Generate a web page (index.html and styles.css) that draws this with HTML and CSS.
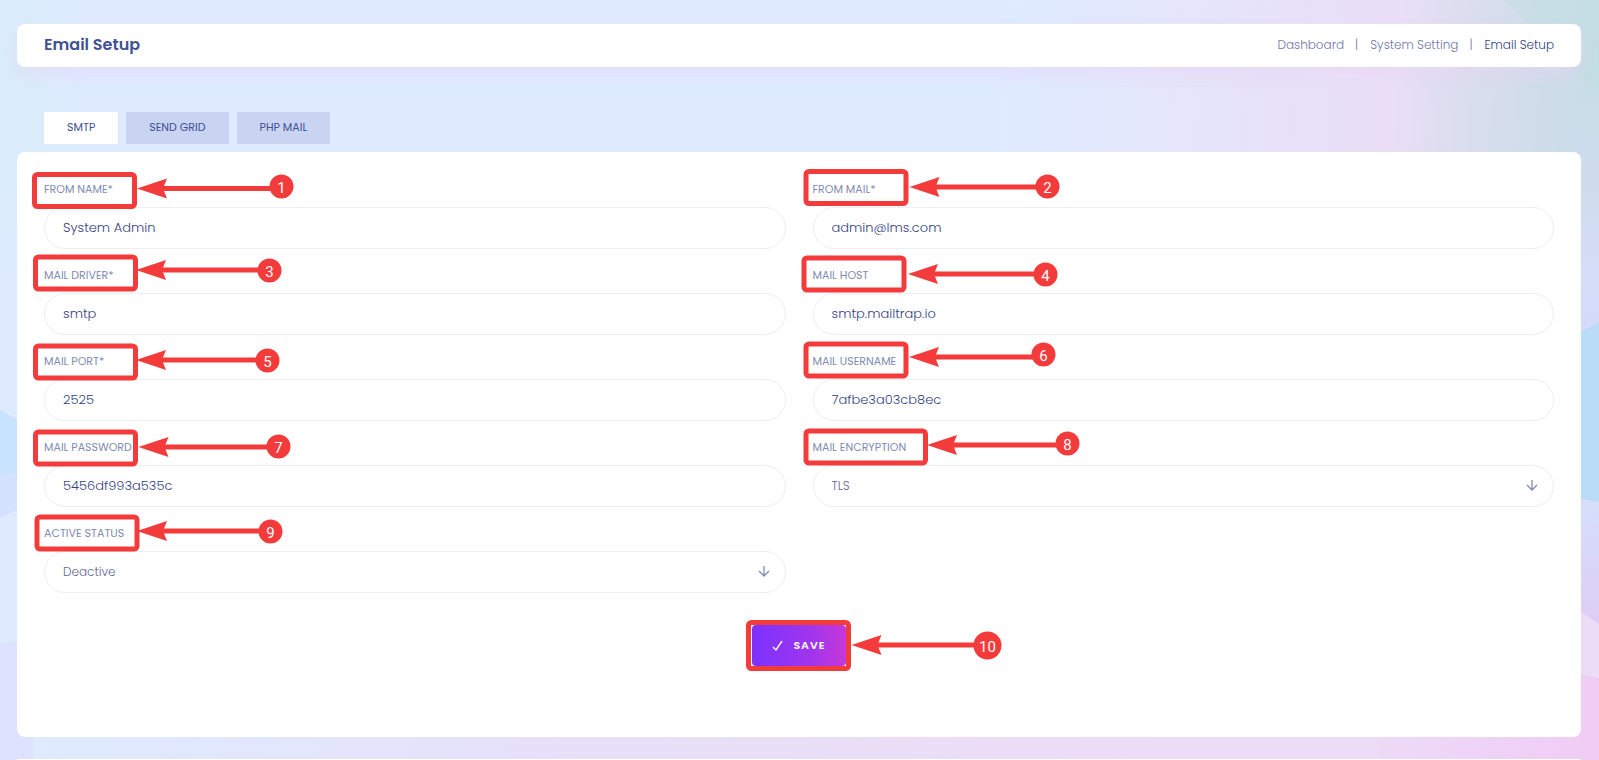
FILE: index.html
```html
<!DOCTYPE html>
<html lang="en">
<head>
    <meta charset="UTF-8">
    <meta name="viewport" content="width=device-width, initial-scale=1.0">
    <title>Email Setup</title>
    <link rel="stylesheet" href="styles.css">
</head>
<body>
    <!-- Page background -->
    <svg class="page-bg" viewBox="0 0 1599 760" preserveAspectRatio="none" aria-hidden="true">
        <defs>
            <linearGradient id="bg-base" gradientUnits="userSpaceOnUse" x1="560" y1="60" x2="1260" y2="620">
                <stop offset="0" stop-color="#deebff"/>
                <stop offset="0.5" stop-color="#e7e0f8"/>
                <stop offset="1" stop-color="#eddcf6"/>
            </linearGradient>
            <linearGradient id="bg-top" gradientUnits="userSpaceOnUse" x1="1000" y1="0" x2="1599" y2="60">
                <stop offset="0" stop-color="#deebff"/>
                <stop offset="0.35" stop-color="#e5e4fa"/>
                <stop offset="0.66" stop-color="#eadff7"/>
                <stop offset="0.8" stop-color="#d8dded"/>
                <stop offset="1" stop-color="#c8dde7"/>
            </linearGradient>
            <linearGradient id="bg-right" x1="0" y1="0" x2="0" y2="1">
                <stop offset="0" stop-color="#c8dde7"/>
                <stop offset="0.35" stop-color="#d0dced"/>
                <stop offset="0.7" stop-color="#d5dcf8"/>
                <stop offset="1" stop-color="#d3dbf9"/>
            </linearGradient>
            <radialGradient id="bg-left">
                <stop offset="0" stop-color="#d8ecf8"/>
                <stop offset="1" stop-color="#d8ecf8" stop-opacity="0"/>
            </radialGradient>
            <linearGradient id="bg-violet" x1="0" y1="0" x2="0" y2="1">
                <stop offset="0" stop-color="#d5dffa"/>
                <stop offset="1" stop-color="#decdf4"/>
            </linearGradient>
            <linearGradient id="bg-pink" gradientUnits="userSpaceOnUse" x1="1380" y1="0" x2="1599" y2="0">
                <stop offset="0" stop-color="#eddaf7"/>
                <stop offset="1" stop-color="#f0ccf5"/>
            </linearGradient>
        </defs>
        <rect width="1599" height="760" fill="url(#bg-base)"/>
        <rect width="1599" height="330" fill="url(#bg-top)"/>
        <rect x="1575" y="90" width="24" height="270" fill="url(#bg-right)"/>
        <path d="M1505 0 L1599 95 V0 Z" fill="#bfe0e0" fill-opacity="0.5"/>
        <ellipse cx="0" cy="90" rx="90" ry="200" fill="url(#bg-left)"/>
        <path d="M0 410 L40 432 V485 L0 475 Z" fill="#c8e3ff"/>
        <path d="M0 475 L40 470 V500 L0 518 Z" fill="#d5e2ff"/>
        <path d="M0 644 L36 638 L33 760 H0 Z" fill="#dfe2ff"/>
        <path d="M1575 335 L1599 322 V502 L1575 498 Z" fill="#bbdcf8"/>
        <path d="M1575 498 L1599 502 V625 L1575 610 Z" fill="url(#bg-violet)"/>
        <path d="M1575 608 L1599 624 V678 L1575 673 Z" fill="#eddcf6"/>
        <path d="M1575 673 L1599 678 V760 H1380 V737 H1575 Z" fill="url(#bg-pink)"/>
    </svg>

    <main class="page">
        <header class="page-header white-box">
            <h1>Email Setup</h1>
            <nav class="breadcrumb">
                <a href="#">Dashboard</a>
                <a href="#">System Setting</a>
                <a href="#" class="active">Email Setup</a>
            </nav>
        </header>

        <div class="tabs" role="tablist">
            <button type="button" role="tab" class="tab active" aria-selected="true">SMTP</button>
            <button type="button" role="tab" class="tab" aria-selected="false">SEND GRID</button>
            <button type="button" role="tab" class="tab" aria-selected="false">PHP MAIL</button>
        </div>

        <form class="white-box mail-form">
            <!-- Arrow head shared by all callouts, tip at 0,0 -->
            <svg class="defs" aria-hidden="true">
                <defs>
                    <path id="head" d="M-1 0 L29 -10 L25 0 L29 10 Z"/>
                </defs>
            </svg>

            <div class="fields">
                <div class="field">
                    <label for="from_name">FROM NAME*</label>
                    <input type="text" id="from_name" value="System Admin">
                    <svg class="callout">
                        <rect x="3.5" y="7.5" width="100" height="32" rx="3"/>
                        <path class="line" d="M130 21.5 H242"/>
                        <use href="#head" x="107" y="21.5"/>
                        <circle cx="250.5" cy="19.5" r="12"/>
                        <text x="250.5" y="25.5">1</text>
                    </svg>
                </div>
                <div class="field">
                    <label for="from_mail">FROM MAIL*</label>
                    <input type="text" id="from_mail" value="admin@lms.com">
                    <svg class="callout">
                        <rect x="6" y="4.5" width="100" height="32" rx="3"/>
                        <path class="line" d="M134 20 H240"/>
                        <use href="#head" x="110.5" y="20"/>
                        <circle cx="247.5" cy="19.5" r="12"/>
                        <text x="247.5" y="25.5">2</text>
                    </svg>
                </div>
                <div class="field">
                    <label for="mail_driver">MAIL DRIVER*</label>
                    <input type="text" id="mail_driver" value="smtp">
                    <svg class="callout">
                        <rect x="4.5" y="4" width="100" height="32" rx="3"/>
                        <path class="line" d="M128 17 H230"/>
                        <use href="#head" x="106" y="17"/>
                        <circle cx="238.5" cy="17.5" r="12"/>
                        <text x="238.5" y="23.5">3</text>
                    </svg>
                </div>
                <div class="field">
                    <label for="mail_host">MAIL HOST</label>
                    <input type="text" id="mail_host" value="smtp.mailtrap.io">
                    <svg class="callout">
                        <rect x="4" y="5" width="100" height="32" rx="3"/>
                        <path class="line" d="M132 21 H236"/>
                        <use href="#head" x="109" y="21"/>
                        <circle cx="245.5" cy="21.5" r="12"/>
                        <text x="245.5" y="27.5">4</text>
                    </svg>
                </div>
                <div class="field">
                    <label for="mail_port">MAIL PORT*</label>
                    <input type="text" id="mail_port" value="2525">
                    <svg class="callout">
                        <rect x="4.5" y="7" width="100" height="32" rx="3"/>
                        <path class="line" d="M128 21 H228"/>
                        <use href="#head" x="106" y="21"/>
                        <circle cx="236.5" cy="21.5" r="12"/>
                        <text x="236.5" y="27.5">5</text>
                    </svg>
                </div>
                <div class="field">
                    <label for="mail_username">MAIL USERNAME</label>
                    <input type="text" id="mail_username" value="7afbe3a03cb8ec">
                    <svg class="callout">
                        <rect x="6" y="5" width="100" height="32" rx="3"/>
                        <path class="line" d="M133 18 H235"/>
                        <use href="#head" x="110" y="18"/>
                        <circle cx="243.5" cy="15.5" r="12"/>
                        <text x="243.5" y="21.5">6</text>
                    </svg>
                </div>
                <div class="field">
                    <label for="mail_password">MAIL PASSWORD</label>
                    <input type="text" id="mail_password" value="5456df993a535c">
                    <svg class="callout">
                        <rect x="4.5" y="7" width="100" height="32" rx="3"/>
                        <path class="line" d="M131 22 H240"/>
                        <use href="#head" x="108.5" y="22"/>
                        <circle cx="247.5" cy="21.5" r="12"/>
                        <text x="247.5" y="27.5">7</text>
                    </svg>
                </div>
                <div class="field">
                    <label for="mail_encryption">MAIL ENCRYPTION</label>
                    <div class="select-wrap">
                        <select id="mail_encryption">
                            <option selected>TLS</option>
                            <option>SSL</option>
                        </select>
                        <svg class="arrow-down" viewBox="0 0 12 12"><path d="M6 1 V11 M1 6 L6 11 L11 6"/></svg>
                    </div>
                    <svg class="callout">
                        <rect x="6" y="6" width="119.5" height="32" rx="3"/>
                        <path class="line" d="M151 20 H260"/>
                        <use href="#head" x="128" y="20"/>
                        <circle cx="267.5" cy="18.5" r="12"/>
                        <text x="267.5" y="24.5">8</text>
                    </svg>
                </div>
                <div class="field">
                    <label for="active_status">ACTIVE STATUS</label>
                    <div class="select-wrap">
                        <select id="active_status">
                            <option>Active</option>
                            <option selected>Deactive</option>
                        </select>
                        <svg class="arrow-down" viewBox="0 0 12 12"><path d="M6 1 V11 M1 6 L6 11 L11 6"/></svg>
                    </div>
                    <svg class="callout">
                        <rect x="6" y="6" width="100" height="32" rx="3"/>
                        <path class="line" d="M129 20 H232"/>
                        <use href="#head" x="107" y="20"/>
                        <circle cx="239.5" cy="20.5" r="12"/>
                        <text x="239.5" y="26.5">9</text>
                    </svg>
                </div>
            </div>

            <div class="save">
                <button type="submit" class="save-btn">
                    <svg viewBox="0 0 12 12"><path d="M1 7 L4 10 L10 1"/></svg>
                    SAVE
                </button>
                <svg class="callout">
                    <rect x="9.5" y="5.5" width="100" height="46" rx="3"/>
                    <path class="line" d="M136 28 H240"/>
                    <use href="#head" x="113.5" y="28"/>
                    <circle cx="248.5" cy="28.5" r="14"/>
                    <text x="248.5" y="34.5">10</text>
                </svg>
            </div>
        </form>

        <footer class="white-box footer"></footer>
    </main>
</body>
</html>
```

FILE: styles.css
```css
* {
    box-sizing: border-box;
}
body {
    margin: 0;
    font-family: Poppins, Inter, sans-serif;
    font-size: 13px;
    color: #415094;
    background: #deebff;
}
.page-bg {
    position: absolute;
    width: 100%;
    height: 100%;
    z-index: -1;
}
.page {
    display: flex;
    flex-direction: column;
    min-height: 100vh;
    padding: 24px 18px 0 17px;
}
.white-box {
    background: #fff;
    border-radius: 8px;
}

/* Header */
.page-header {
    display: flex;
    justify-content: space-between;
    align-items: center;
    padding: 7px 27px 9px;
    box-shadow: 0 8px 16px rgba(236, 208, 244, 0.4);
}
h1 {
    margin: 0;
    font-size: 16px;
    line-height: 27px;
    font-weight: 600;
}
.breadcrumb {
    display: flex;
    font-size: 12px;
    line-height: 24px;
    font-weight: 300;
}
.breadcrumb a {
    color: #6f79a8;
    text-decoration: none;
}
.breadcrumb a + a::before {
    content: "|";
    margin: 0 12px 0 11px;
    color: #6f79a8;
}
.breadcrumb .active {
    color: #35437f;
}

/* Tabs */
.tabs {
    display: flex;
    gap: 8px;
    margin: 45px 27px 8px;
}
.tab {
    height: 32px;
    padding: 0 23px 2px;
    border: 0;
    background: #c9d4f3;
    color: #415094;
    font-family: inherit;
    font-size: 11px;
    font-weight: 400;
}
.tab.active {
    background: #fff;
}

/* Form */
.mail-form {
    padding: 23px 27px 71px;
}
.defs {
    position: absolute;
    width: 0;
    height: 0;
}
.fields {
    display: grid;
    grid-template-columns: 1fr 1fr;
    gap: 12px 27px;
}
.field {
    position: relative;
}
label {
    display: block;
    margin-bottom: 4px;
    font-size: 11px;
    line-height: 28px;
    color: #828bb2;
}
input,
select {
    display: block;
    width: 100%;
    height: 42px;
    padding: 0 18px 1px;
    border: 1px solid #eceef4;
    border-radius: 21px;
    outline: 0;
    background: #fff;
    color: #35437f;
    font-family: inherit;
    font-size: 13px;
    font-weight: 300;
}
select {
    appearance: none;
    color: #5f6a96;
    font-size: 12px;
}
.select-wrap {
    position: relative;
}
.arrow-down {
    position: absolute;
    right: 16px;
    top: 14px;
    width: 12px;
    height: 12px;
    fill: none;
    stroke: #828bb2;
    stroke-width: 1.3px;
    pointer-events: none;
}

.save {
    position: relative;
    width: 94px;
    margin: 32px auto 0;
}
.save-btn {
    display: flex;
    justify-content: center;
    align-items: center;
    gap: 9px;
    width: 100%;
    height: 41px;
    padding: 0;
    border: 0;
    border-radius: 4px;
    background: linear-gradient(90deg, #7c32ff 0%, #a235ec 65%, #c738d8 100%);
    color: #fff;
    font-family: inherit;
    font-size: 11px;
    font-weight: 600;
    letter-spacing: 1px;
}
.save-btn svg {
    width: 12px;
    height: 12px;
    fill: none;
    stroke: #fff;
    stroke-width: 1.4px;
}

/* Numbered callouts */
.callout {
    position: absolute;
    left: -13px;
    top: -8px;
    width: 290px;
    height: 60px;
    fill: #f33b3b;
    pointer-events: none;
}
.callout rect {
    fill: none;
    stroke: #f33b3b;
    stroke-width: 5px;
}
.callout .line {
    stroke: #f33b3b;
    stroke-width: 5px;
}
.callout text {
    fill: #fff;
    font-family: Roboto, sans-serif;
    font-size: 15px;
    text-anchor: middle;
}

/* Continues below the fold */
.footer {
    flex: 1;
    margin-top: 22px;
    border-radius: 8px 8px 0 0;
}
```
